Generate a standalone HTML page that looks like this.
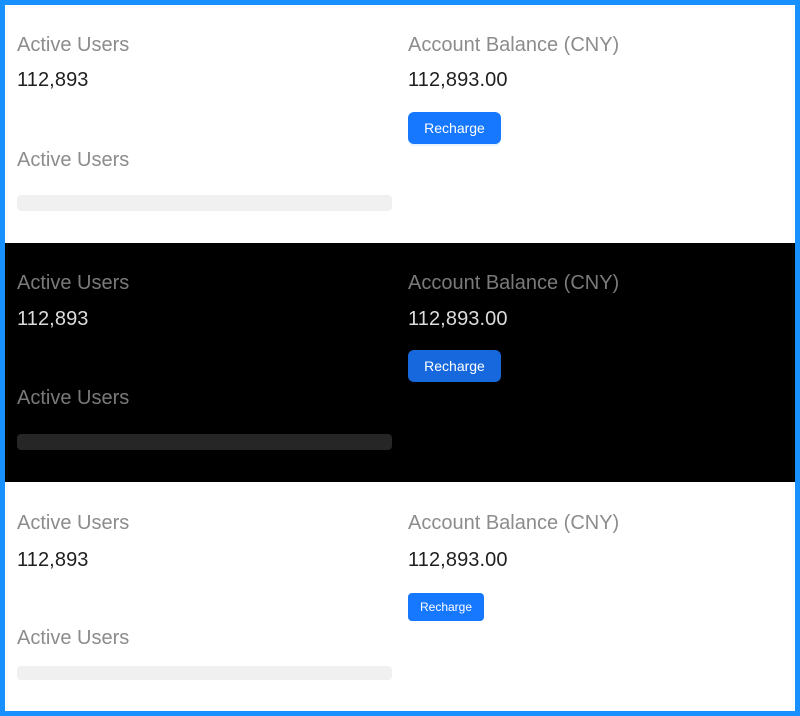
<!DOCTYPE html>
<html><head><style>
*{margin:0;padding:0;box-sizing:border-box}
html,body{width:800px;height:716px;overflow:hidden;background:#1890ff;font-family:"Liberation Sans",Arial,sans-serif}
.frame{position:absolute;left:5px;top:5px;width:790px;height:706px;background:#fff}
.sec{position:absolute;left:5px;width:790px}
.t{position:absolute;font-size:20px;line-height:24px;white-space:nowrap}
.v{letter-spacing:0.1px}
.btn{position:absolute;border-radius:6px;color:#fff;text-align:center;white-space:nowrap}
.sk{position:absolute;left:17px;width:375px;border-radius:4px}
</style></head><body>
<div class="frame"></div>
<div class="sec" style="top:243px;height:239px;background:#000"></div>

<div class="t" style="left:17px;top:33px;color:#8c8c8c">Active Users</div>
<div class="t v" style="left:17px;top:68px;color:#1f1f1f">112,893</div>
<div class="t" style="left:17px;top:148px;color:#8c8c8c">Active Users</div>
<div class="sk" style="top:195px;height:16px;background:#f0f0f0"></div>
<div class="t" style="left:408px;top:33px;color:#8c8c8c">Account Balance (CNY)</div>
<div class="t v" style="left:408px;top:68px;color:#1f1f1f">112,893.00</div>
<div class="btn" style="left:408px;top:112px;width:93px;height:32px;line-height:32px;font-size:14px;background:#1677ff;box-shadow:0 2px 0 rgba(5,145,255,.1)">Recharge</div>

<div class="t" style="left:17px;top:271px;color:#7a7a7a">Active Users</div>
<div class="t v" style="left:17px;top:307px;color:#dcdcdc">112,893</div>
<div class="t" style="left:17px;top:386px;color:#7a7a7a">Active Users</div>
<div class="sk" style="top:434px;height:16px;background:#262626"></div>
<div class="t" style="left:408px;top:271px;color:#7a7a7a">Account Balance (CNY)</div>
<div class="t v" style="left:408px;top:307px;color:#dcdcdc">112,893.00</div>
<div class="btn" style="left:408px;top:350px;width:93px;height:32px;line-height:32px;font-size:14px;background:#1668dc">Recharge</div>

<div class="t" style="left:17px;top:511px;color:#8c8c8c">Active Users</div>
<div class="t v" style="left:17px;top:548px;color:#1f1f1f">112,893</div>
<div class="t" style="left:17px;top:626px;color:#8c8c8c">Active Users</div>
<div class="sk" style="top:666px;height:14px;background:#f0f0f0"></div>
<div class="t" style="left:408px;top:511px;color:#8c8c8c">Account Balance (CNY)</div>
<div class="t v" style="left:408px;top:548px;color:#1f1f1f">112,893.00</div>
<div class="btn" style="left:408px;top:593px;width:76px;height:28px;line-height:28px;font-size:12px;background:#1677ff;border-radius:4px">Recharge</div>
</body></html>
